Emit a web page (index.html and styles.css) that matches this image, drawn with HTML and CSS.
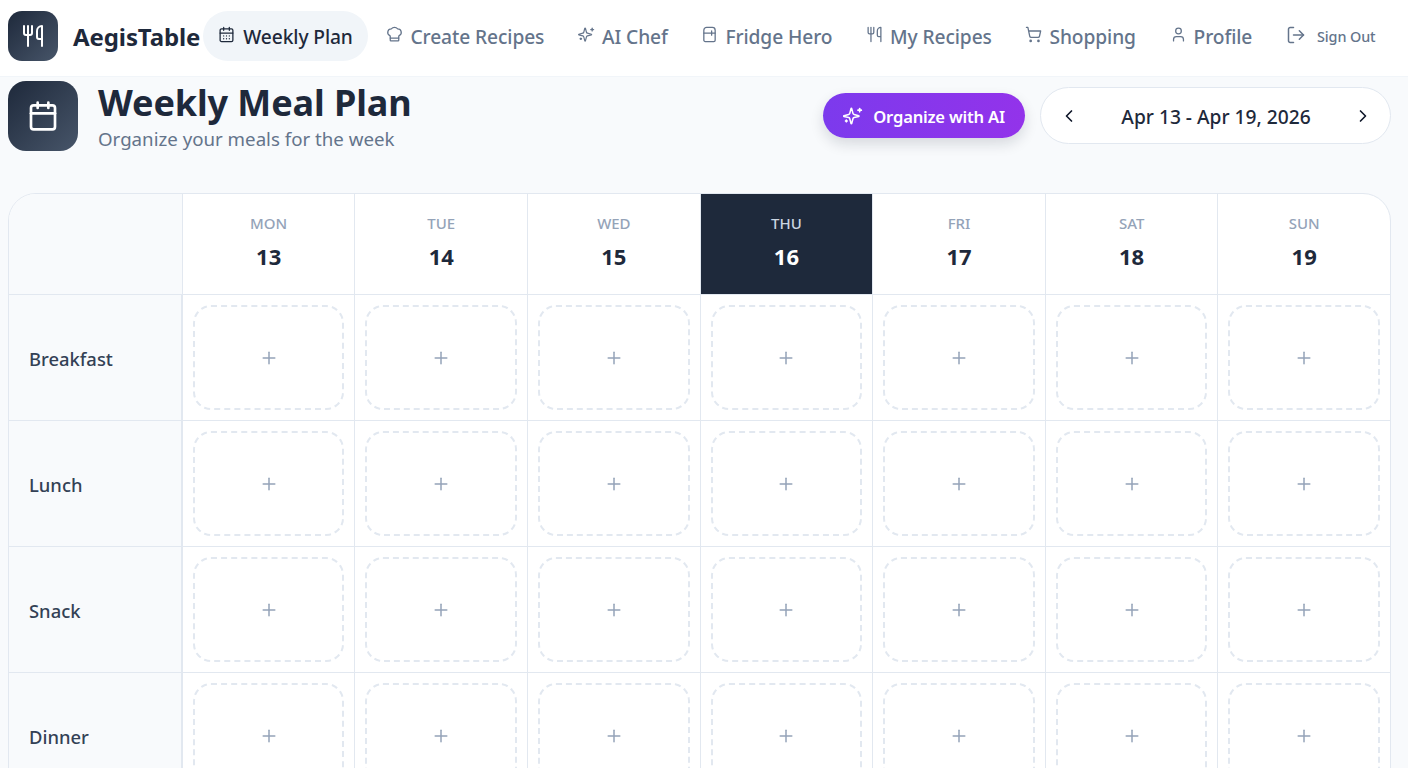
FILE: index.html
```html
<!DOCTYPE html>
<html lang="en">
<head>
<meta charset="utf-8">
<title>AegisTable</title>
<link rel="stylesheet" href="styles.css">
</head>
<body>
<svg class="defs" width="0" height="0" aria-hidden="true">
  <symbol id="i-utensils" viewBox="0 0 24 24"><path d="M3 2v7c0 1.1.9 2 2 2h4a2 2 0 0 0 2-2V2"/><path d="M7 2v20"/><path d="M21 15V2a5 5 0 0 0-5 5v6c0 1.1.9 2 2 2h3Zm0 0v7"/></symbol>
  <symbol id="i-sparkles" viewBox="0 0 24 24"><path d="M9.94 15.5A2 2 0 0 0 8.5 14.06l-6.14-1.58a.5.5 0 0 1 0-.96L8.5 9.94A2 2 0 0 0 9.94 8.5l1.58-6.14a.5.5 0 0 1 .96 0L14.06 8.5A2 2 0 0 0 15.5 9.94l6.14 1.58a.5.5 0 0 1 0 .96L15.5 14.06a2 2 0 0 0-1.44 1.44l-1.58 6.14a.5.5 0 0 1-.96 0Z" transform="translate(-1 1) scale(.92)"/><path d="M20 3v4"/><path d="M22 5h-4"/><path d="M4 17v2"/><path d="M5 18H3"/></symbol>
  <symbol id="i-plus" viewBox="0 0 24 24"><path d="M5 12h14"/><path d="M12 5v14"/></symbol>
</svg>
<header class="topbar">
  <div class="brand">
    <span class="logo"><svg class="ic ic-logo"><use href="#i-utensils"/></svg></span>
    <span class="brand-name">AegisTable</span>
  </div>
  <nav class="nav">
    <a class="nav-item active"><svg class="ic" viewBox="0 0 24 24"><path d="M8 2v4"/><path d="M16 2v4"/><rect x="3" y="4" width="18" height="18" rx="2"/><path d="M3 10h18"/><path d="M8 14h.01M12 14h.01M16 14h.01M8 18h.01M12 18h.01M16 18h.01"/></svg>Weekly Plan</a>
    <a class="nav-item"><svg class="ic" viewBox="0 0 24 24"><path d="M17 21a1 1 0 0 0 1-1v-5.35c0-.46.3-.85.7-1.1a5 5 0 0 0-2.2-9.5 6 6 0 0 0-9 0 5 5 0 0 0-2.2 9.5c.4.25.7.64.7 1.1V20a1 1 0 0 0 1 1Z"/><path d="M6 17h12"/></svg>Create Recipes</a>
    <a class="nav-item"><svg class="ic"><use href="#i-sparkles"/></svg>AI Chef</a>
    <a class="nav-item"><svg class="ic" viewBox="0 0 24 24"><path d="M4 6a4 4 0 0 1 4-4h8a4 4 0 0 1 4 4v14a2 2 0 0 1-2 2H6a2 2 0 0 1-2-2Z"/><path d="M4 10h16"/><path d="M15 7v6"/></svg>Fridge Hero</a>
    <a class="nav-item"><svg class="ic"><use href="#i-utensils"/></svg>My Recipes</a>
    <a class="nav-item"><svg class="ic" viewBox="0 0 24 24"><circle cx="8" cy="21" r="1"/><circle cx="19" cy="21" r="1"/><path d="M2.05 2.05h2l2.66 12.42a2 2 0 0 0 2 1.58h9.78a2 2 0 0 0 1.95-1.57l1.65-7.43H5.12"/></svg>Shopping</a>
    <a class="nav-item"><svg class="ic" viewBox="0 0 24 24"><path d="M19 21v-2a4 4 0 0 0-4-4H9a4 4 0 0 0-4 4v2"/><circle cx="12" cy="7" r="4"/></svg>Profile</a>
    <a class="nav-item signout"><svg class="ic ic-out" viewBox="0 0 24 24"><path d="M9 21H5a2 2 0 0 1-2-2V5a2 2 0 0 1 2-2h4"/><path d="m16 17 5-5-5-5"/><path d="M21 12H9"/></svg>Sign Out</a>
  </nav>
</header>
<main class="page">
  <section class="title-row">
    <div class="title-left">
      <span class="title-icon"><svg class="ic ic-title" viewBox="0 0 24 24"><path d="M8 2v4"/><path d="M16 2v4"/><rect x="3" y="4" width="18" height="18" rx="2"/><path d="M3 10h18"/></svg></span>
      <div class="title-text">
        <h1>Weekly Meal Plan</h1>
        <p>Organize your meals for the week</p>
      </div>
    </div>
    <div class="title-right">
      <button class="ai-btn"><svg class="ic ic-ai"><use href="#i-sparkles"/></svg>Organize with AI</button>
      <div class="week-picker">
        <svg class="ic ic-chev" viewBox="0 0 24 24"><path d="m15 18-6-6 6-6"/></svg>
        <span>Apr 13 - Apr 19, 2026</span>
        <svg class="ic ic-chev" viewBox="0 0 24 24"><path d="m9 18 6-6-6-6"/></svg>
      </div>
    </div>
  </section>
  <section class="plan">
    <div class="head corner"></div>
    <div class="head"><span class="dow">MON</span><span class="dom">13</span></div>
    <div class="head"><span class="dow">TUE</span><span class="dom">14</span></div>
    <div class="head"><span class="dow">WED</span><span class="dom">15</span></div>
    <div class="head today"><span class="dow">THU</span><span class="dom">16</span></div>
    <div class="head"><span class="dow">FRI</span><span class="dom">17</span></div>
    <div class="head"><span class="dow">SAT</span><span class="dom">18</span></div>
    <div class="head"><span class="dow">SUN</span><span class="dom">19</span></div>

    <div class="meal">Breakfast</div>
    <div class="cell"><div class="slot"><svg class="ic ic-plus"><use href="#i-plus"/></svg></div></div>
    <div class="cell"><div class="slot"><svg class="ic ic-plus"><use href="#i-plus"/></svg></div></div>
    <div class="cell"><div class="slot"><svg class="ic ic-plus"><use href="#i-plus"/></svg></div></div>
    <div class="cell"><div class="slot"><svg class="ic ic-plus"><use href="#i-plus"/></svg></div></div>
    <div class="cell"><div class="slot"><svg class="ic ic-plus"><use href="#i-plus"/></svg></div></div>
    <div class="cell"><div class="slot"><svg class="ic ic-plus"><use href="#i-plus"/></svg></div></div>
    <div class="cell"><div class="slot"><svg class="ic ic-plus"><use href="#i-plus"/></svg></div></div>

    <div class="meal">Lunch</div>
    <div class="cell"><div class="slot"><svg class="ic ic-plus"><use href="#i-plus"/></svg></div></div>
    <div class="cell"><div class="slot"><svg class="ic ic-plus"><use href="#i-plus"/></svg></div></div>
    <div class="cell"><div class="slot"><svg class="ic ic-plus"><use href="#i-plus"/></svg></div></div>
    <div class="cell"><div class="slot"><svg class="ic ic-plus"><use href="#i-plus"/></svg></div></div>
    <div class="cell"><div class="slot"><svg class="ic ic-plus"><use href="#i-plus"/></svg></div></div>
    <div class="cell"><div class="slot"><svg class="ic ic-plus"><use href="#i-plus"/></svg></div></div>
    <div class="cell"><div class="slot"><svg class="ic ic-plus"><use href="#i-plus"/></svg></div></div>

    <div class="meal">Snack</div>
    <div class="cell"><div class="slot"><svg class="ic ic-plus"><use href="#i-plus"/></svg></div></div>
    <div class="cell"><div class="slot"><svg class="ic ic-plus"><use href="#i-plus"/></svg></div></div>
    <div class="cell"><div class="slot"><svg class="ic ic-plus"><use href="#i-plus"/></svg></div></div>
    <div class="cell"><div class="slot"><svg class="ic ic-plus"><use href="#i-plus"/></svg></div></div>
    <div class="cell"><div class="slot"><svg class="ic ic-plus"><use href="#i-plus"/></svg></div></div>
    <div class="cell"><div class="slot"><svg class="ic ic-plus"><use href="#i-plus"/></svg></div></div>
    <div class="cell"><div class="slot"><svg class="ic ic-plus"><use href="#i-plus"/></svg></div></div>

    <div class="meal">Dinner</div>
    <div class="cell"><div class="slot"><svg class="ic ic-plus"><use href="#i-plus"/></svg></div></div>
    <div class="cell"><div class="slot"><svg class="ic ic-plus"><use href="#i-plus"/></svg></div></div>
    <div class="cell"><div class="slot"><svg class="ic ic-plus"><use href="#i-plus"/></svg></div></div>
    <div class="cell"><div class="slot"><svg class="ic ic-plus"><use href="#i-plus"/></svg></div></div>
    <div class="cell"><div class="slot"><svg class="ic ic-plus"><use href="#i-plus"/></svg></div></div>
    <div class="cell"><div class="slot"><svg class="ic ic-plus"><use href="#i-plus"/></svg></div></div>
    <div class="cell"><div class="slot"><svg class="ic ic-plus"><use href="#i-plus"/></svg></div></div>
  </section>
</main>
</body>
</html>
```
FILE: styles.css
```css
* { box-sizing: border-box; }
html, body { margin: 0; height: 768px; overflow: hidden; }
body {
  font-family: "Noto Sans", "Open Sans", sans-serif;
  background: #f8fafc;
  color: #1e293b;
}
.defs { position: absolute; }
.ic {
  width: 16px; height: 16px; flex: none;
  fill: none; stroke: currentColor; stroke-width: 2;
  stroke-linecap: round; stroke-linejoin: round;
}
.topbar {
  height: 77px;
  background: #fff;
  border-bottom: 1px solid #f1f5f9;
  padding: 11px 8px 0;
  display: flex;
  align-items: flex-start;
}
.brand { display: flex; align-items: center; gap: 15px; margin-right: 3px; }
.logo {
  width: 50px; height: 50px; border-radius: 14px;
  background: linear-gradient(135deg, #1e293b, #475569);
  color: #fff;
  display: flex; align-items: center; justify-content: center;
}
.ic-logo { width: 24px; height: 24px; }
.brand-name { font-size: 24px; font-weight: 700; color: #1e293b; letter-spacing: -0.1px; }
.nav { display: flex; align-items: center; gap: 3.7px; height: 50px; }
.nav-item {
  display: flex; align-items: center; gap: 7px;
  height: 50px; padding: 0 15px; border-radius: 25px;
  font-size: 19.2px; font-weight: 500; color: #64748b;
  letter-spacing: -0.1px; white-space: nowrap;
}
.nav-item .ic { width: 17px; height: 17px; margin-top: -3px; stroke-width: 1.8; }
.nav-item.active { background: #f1f5f9; color: #1e293b; gap: 8px; }
.nav-item.signout { font-size: 14.4px; gap: 11px; }
.nav-item .ic-out { width: 20px; height: 20px; }
.page { padding: 4px 17px 0 8px; }
.title-row { display: flex; justify-content: space-between; align-items: flex-start; height: 112px; }
.title-left { display: flex; gap: 20px; }
.title-icon {
  width: 70px; height: 70px; border-radius: 18px;
  background: linear-gradient(135deg, #1e293b, #475569);
  color: #fff;
  display: flex; align-items: center; justify-content: center;
}
.ic-title { width: 32px; height: 32px; }
.title-text h1 { margin: 0; font-size: 36px; line-height: 44px; font-weight: 700; color: #1e293b; letter-spacing: -0.1px; }
.title-text p { margin: 0; font-size: 18.7px; line-height: 28px; color: #64748b; }
.title-right { display: flex; align-items: center; gap: 15px; padding-top: 6px; }
.ai-btn {
  height: 45px; padding: 1px 20px 0; border: 0; border-radius: 23px;
  display: flex; align-items: center; gap: 10px;
  background: linear-gradient(90deg, #7c3aed, #9333ea);
  color: #fff; font: 600 16.6px "Noto Sans", sans-serif; letter-spacing: -0.2px;
  box-shadow: 0 6px 14px rgba(15, 23, 42, 0.14);
}
.ic-ai { width: 20px; height: 20px; stroke-width: 2; }
.week-picker {
  width: 351px; height: 57px; border-radius: 29px;
  background: #fff; border: 1px solid #e2e8f0;
  display: flex; align-items: center; justify-content: space-between;
  padding: 0 17px 0 18px;
  font-size: 19.2px; font-weight: 500; color: #1e293b;
}
.week-picker span { padding-top: 2px; }
.ic-chev { width: 20px; height: 20px; color: #0f172a; stroke-width: 2; }
.plan {
  display: grid;
  grid-template-columns: 172.9px repeat(7, 1fr);
  grid-auto-rows: 126px;
  grid-template-rows: 101px;
  width: 1383px;
  background: #fff;
  border: 1px solid #e2e8f0;
  border-radius: 28px;
  overflow: hidden;
}
.head {
  display: flex; flex-direction: column; align-items: center;
  padding-top: 19px; gap: 8px;
  border-left: 1px solid #e2e8f0;
  border-bottom: 1px solid #e2e8f0;
}
.corner { background: #f8fafc; border-left: 0; }
.dow { font-size: 15px; line-height: 20px; font-weight: 500; color: #94a3b8; }
.dom { font-size: 22px; line-height: 30px; font-weight: 700; color: #1e293b; }
.today { background: #1e293b; }
.today .dow { color: #cbd5e1; }
.today .dom { color: #fff; }
.meal {
  display: flex; align-items: center; padding: 2px 0 0 20px;
  background: #f8fafc;
  font-size: 18.4px; font-weight: 500; color: #334155;
  border-bottom: 1px solid #e2e8f0;
  border-right: 1px solid #e2e8f0;
}
.cell {
  padding: 10px;
  border-left: 1px solid #e2e8f0;
  border-bottom: 1px solid #e2e8f0;
}
.slot {
  height: 105px;
  border: 2px dashed #e2e8f0;
  border-radius: 18px;
  display: flex; align-items: center; justify-content: center;
  color: #94a3b8;
}
.ic-plus { width: 20px; height: 20px; stroke-width: 1.8; }
```
